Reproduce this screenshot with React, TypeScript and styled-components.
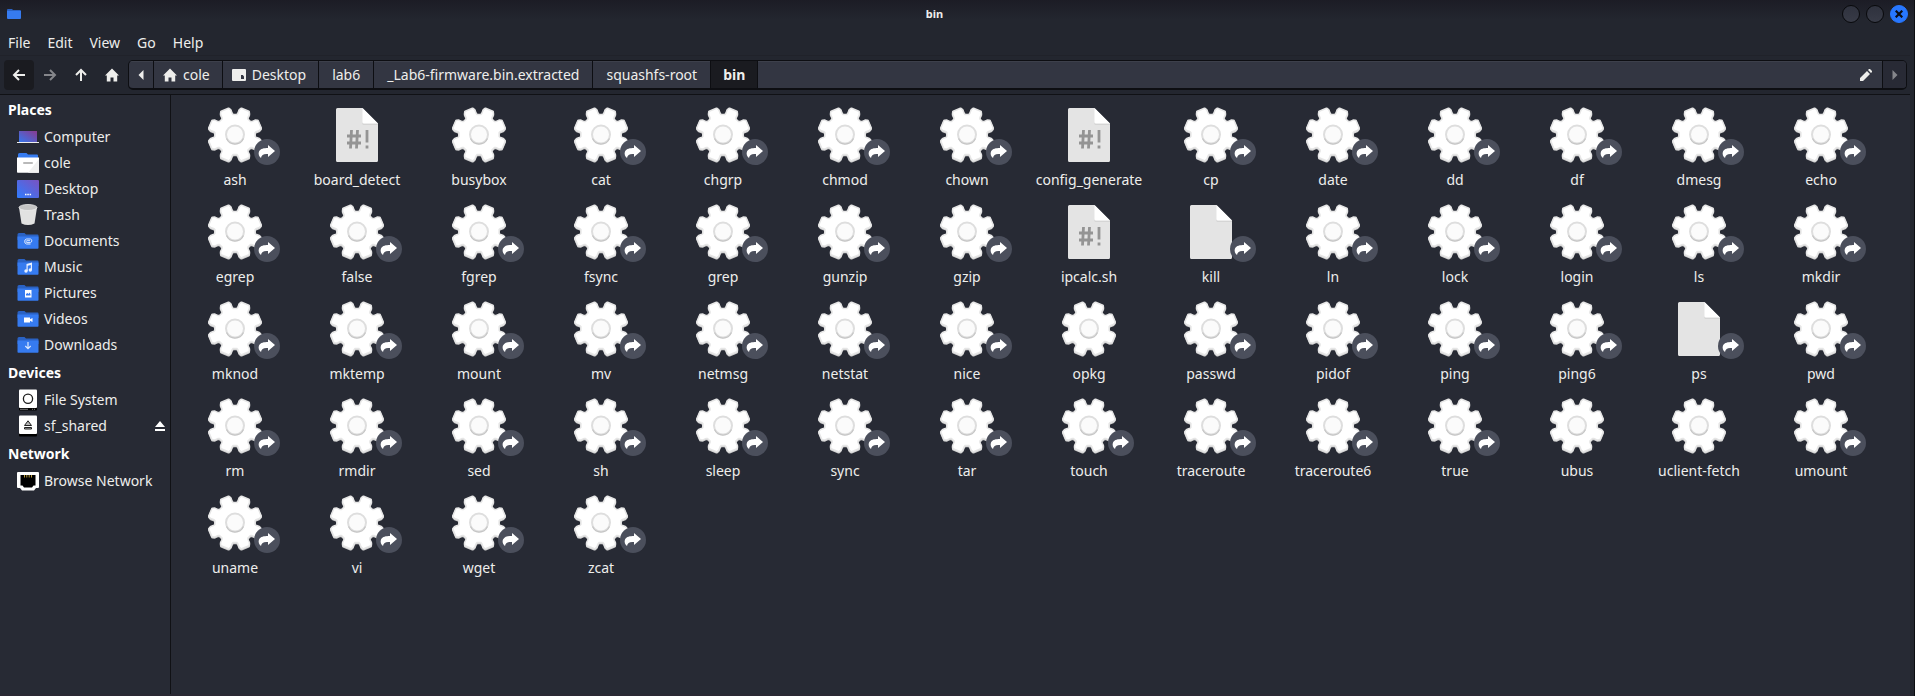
import React from "react";
import styled, { createGlobalStyle, css } from "styled-components";

const GlobalStyle = createGlobalStyle`
  *, *::before, *::after { box-sizing: border-box; }
  body {
    margin: 0;
    background: #272a34;
    color: #eeeeec;
    font-family: "Noto Sans", "Open Sans", sans-serif;
    font-size: 14px;
    line-height: 20px;
  }
  button { font: inherit; color: inherit; border: 0; padding: 0; background: none; }
  ul { list-style: none; margin: 0; padding: 0; }
  svg { display: block; flex: none; }
`;

const Window = styled.div`
  display: flex;
  flex-direction: column;
  min-height: 100vh;
  background: linear-gradient(#1c1c25, #23262f 20px);
  border-right: 1px solid #0c0d11;
`;

const TitleBar = styled.header`
  display: flex;
  align-items: center;
  height: 28px;
  padding: 0 6px 0 7px;
`;

const Title = styled.h1`
  flex: 1;
  margin: 0;
  text-align: center;
  font-size: 11px;
  font-weight: 700;
  padding-left: 6px;
`;

const WindowControls = styled.div`
  display: flex;
  gap: 6px;
`;

const ControlButton = styled.button<{ $close?: boolean }>`
  display: grid;
  place-items: center;
  width: 18px;
  height: 18px;
  border-radius: 50%;
  border: 1px solid ${(p) => (p.$close ? "#2777ff" : "#08090c")};
  background: ${(p) => (p.$close ? "#2777ff" : "linear-gradient(#2f323e, #383b47)")};
`;

const MenuBar = styled.nav`
  display: flex;
  align-items: center;
  gap: 1px;
  height: 27px;
  padding-top: 3px;
`;

const MenuItem = styled.button`
  padding: 0 8px;
`;

const Toolbar = styled.div`
  display: flex;
  align-items: center;
  gap: 1px;
  height: 40px;
  margin-right: 4px;
  padding: 0 3px 0 4px;
  border-top: 1px solid #20222a;
  border-bottom: 1px solid #101115;
`;

const ToolButton = styled.button<{ $active?: boolean }>`
  display: grid;
  place-items: center;
  width: 30px;
  height: 30px;
  border-radius: 4px;
  background: ${(p) => (p.$active ? "#1a1b20" : "transparent")};
  color: #eeeeec;
  &:disabled { color: #85868b; }
`;

const PathBar = styled.div`
  display: flex;
  flex: 1;
  height: 30px;
  border: 1px solid #0d0e12;
  border-bottom-width: 2px;
  border-radius: 5px;
  background: #333642;
  overflow: hidden;
`;

const PathButton = styled.button<{ $current?: boolean; $icon?: boolean }>`
  display: flex;
  align-items: center;
  gap: 6px;
  padding: ${(p) => (p.$icon ? "0 12px 0 9px" : "0 13px")};
  border-right: 1px solid #0d0e12;
  box-shadow: inset 0 1px #3d404b;
  ${(p) =>
    p.$current &&
    css`
      padding: 0 12px;
      background: #1a1b20;
      box-shadow: none;
      font-weight: 700;
    `}
`;

const PathArrow = styled.button<{ $end?: boolean }>`
  display: grid;
  place-items: center;
  width: 25px;
  color: #eeeeec;
  box-shadow: inset 0 1px #3d404b;
  border-right: 1px solid #0d0e12;
  ${(p) =>
    p.$end &&
    css`
      width: 24px;
      border-right: 0;
      border-left: 1px solid #0d0e12;
      background: #282a35;
      box-shadow: none;
      color: #85868b;
    `}
`;

const PathSpace = styled.div`
  display: flex;
  flex: 1;
  justify-content: flex-end;
  align-items: center;
  padding-right: 10px;
  box-shadow: inset 0 1px #3d404b;
`;

const Body = styled.div`
  display: flex;
  flex: 1;
  margin-right: 4px;
  background: #272a34;
  border-bottom: 2px solid #2a2833;
`;

const Sidebar = styled.aside`
  width: 171px;
  flex: none;
  border-right: 1px solid #101115;
`;

const GroupTitle = styled.h2`
  margin: 0;
  padding: 0 8px;
  font-size: 14px;
  line-height: 29px;
  font-weight: 700;
  color: #ffffff;
`;

const PlaceRow = styled.li`
  display: flex;
  align-items: center;
  height: 26px;
  padding: 0 5px 0 17px;
`;

const PlaceLink = styled.a`
  display: flex;
  flex: 1;
  align-items: center;
  gap: 5px;
  color: inherit;
  text-decoration: none;
  white-space: nowrap;
`;

const FileGrid = styled.ul`
  flex: 1;
  display: grid;
  grid-template-columns: repeat(auto-fill, 122px);
  grid-auto-rows: 97px;
  align-content: start;
  && { padding: 8px 3px; }
`;

const FileItem = styled.li`
  display: flex;
  flex-direction: column;
  align-items: center;
  padding-top: 1px;
`;

const FileIcon = styled.div`
  position: relative;
  width: 64px;
  height: 64px;
`;

const LinkBadge = styled.span`
  position: absolute;
  right: -13px;
  bottom: 3px;
  display: grid;
  place-items: center;
  width: 26px;
  height: 26px;
  border-radius: 50%;
  background: #4b4f5c;
`;

const FileName = styled.span`
  margin-top: 2px;
  white-space: nowrap;
`;

const polar = (radius: number, degrees: number) => {
  const a = (degrees * Math.PI) / 180;
  return `${(32 + radius * Math.sin(a)).toFixed(2)},${(30.5 - radius * Math.cos(a)).toFixed(2)}`;
};

const gearPoints = Array.from({ length: 8 }, (_, i) => {
  const a = 22.5 + i * 45;
  return [
    polar(19.5, a - 16),
    polar(21, a - 13),
    polar(24.5, a - 11.5),
    polar(26.3, a - 8.5),
    polar(26.3, a + 8.5),
    polar(24.5, a + 11.5),
    polar(21, a + 13),
    polar(19.5, a + 16),
  ].join(" ");
}).join(" ");

const Gear = () => (
  <svg width="64" height="64" viewBox="0 0 64 64" strokeLinejoin="round">
    <polygon points={gearPoints} transform="translate(0 1)" fill="#cfcfcf" stroke="#cfcfcf" strokeWidth="3" />
    <polygon points={gearPoints} fill="#e6e6e6" stroke="#e6e6e6" strokeWidth="3" />
    <polygon points={gearPoints} fill="#ffffff" />
    <circle cx="32" cy="30.500" r="9" fill="#fbfbfb" stroke="#dedede" strokeWidth="2" />
    <path d="M23.500 34.500a9.300 9.300 0 0 0 17 0" fill="none" stroke="#c6c6c6" strokeWidth="1.200" />
  </svg>
);

const Page = ({ script }: { script?: boolean }) => (
  <svg width="64" height="64" viewBox="0 0 64 64">
    <path d="M12.500 4h25L53 19.500V56.500a1.500 1.500 0 0 1-1.500 1.500H12.500a1.500 1.500 0 0 1-1.500-1.500V5.500A1.500 1.500 0 0 1 12.500 4z" fill="#e4e4e4" />
    <path d="M37 19.500h16v1.200H39a2 2 0 0 1-2-1.200z" fill="#cfcfcf" />
    <path d="M37.500 4 53 19.500H39a1.500 1.500 0 0 1-1.500-1.500z" fill="#ffffff" />
    {script && (
      <path
        d="M26.500 26 25.500 44.500M32.500 26l-1 18.500M22 32h14M22 39h14M42 26v12.500M42 41.500v3"
        fill="none"
        stroke="#949494"
        strokeWidth="2.800"
      />
    )}
  </svg>
);

const ShareArrow = () => (
  <svg width="18" height="14" viewBox="0 0 18 14">
    <path d="M10 0 17 6 10 12V9C6 8.500 3.500 9.500 3 13 1 11.500 0 9 1 6.500 2.500 3.500 6 3 10 3z" fill="#fff" />
  </svg>
);

const HomeGlyph = () => (
  <svg width="14" height="14" viewBox="0 0 14 14">
    <path d="M7 .5 14 7.500H12.200V13.500H8.500V9.500H5.500V13.500H1.800V7.500H0z" fill="currentColor" />
  </svg>
);

const Arrow = ({ turn }: { turn: number }) => (
  <svg width="14" height="14" viewBox="0 0 14 14">
    <path
      d="M2 7H13M7 2 2 7 7 12"
      transform={`rotate(${turn} 7 7)`}
      fill="none"
      stroke="currentColor"
      strokeWidth="2"
    />
  </svg>
);

const Caret = ({ right }: { right?: boolean }) => (
  <svg width="6" height="10" viewBox="0 0 6 10">
    <path d={right ? "M.5 0 5.500 5 .5 10z" : "M5.500 0 .5 5 5.500 10z"} fill="currentColor" />
  </svg>
);

const folderGlyphs: Record<string, React.ReactNode> = {
  documents: (
    <path
      d="M13.500 14H9.500a2.600 2.600 0 0 1 0-5H13.500a1.900 1.900 0 0 1 0 3.600H9.800a1 1 0 0 1 0-1.900H13"
      fill="none"
      stroke="#dbe8ff"
      strokeWidth="1"
    />
  ),
  music: (
    <g fill="#e8f0ff">
      <path d="M9.500 8 15 6.500V14H13.800V9L10.700 9.800V15H9.500z" />
      <circle cx="9" cy="15" r="1.700" />
      <circle cx="13.300" cy="14" r="1.700" />
    </g>
  ),
  pictures: (
    <g>
      <rect x="8" y="8" width="6.500" height="7.500" fill="#fff" />
      <path d="M9 13.500V12l1.500-1 1 1 1-1.500 1 1.500V13.500z" fill="#367bf0" />
    </g>
  ),
  videos: <path d="M7 9.500h6v1.700l2.500-1.200v4L13 12.800v1.700H7z" fill="#fff" />,
  downloads: <path d="M11 8v6.500M8.300 12l2.700 2.700L13.700 12" fill="none" stroke="#dbe8ff" strokeWidth="1.200" />,
};

const Folder = ({ kind }: { kind: string }) => (
  <svg width="22" height="22" viewBox="0 0 22 22">
    <path d="M.5 4.500A1.500 1.500 0 0 1 2 3H7.500L9 4.500H20.500a1 1 0 0 1 1 1V10H.5z" fill="#2a62c4" />
    <path d="M.5 6.500H21.500V18a.8.800 0 0 1-.8.800H1.300A.8.800 0 0 1 .5 18z" fill="#367bf0" />
    {folderGlyphs[kind]}
  </svg>
);

const PlaceIcon = ({ kind }: { kind: string }) => {
  if (kind in folderGlyphs) return <Folder kind={kind} />;
  return (
    <svg width="22" height="22" viewBox="0 0 22 22">
      <defs>
        <linearGradient id="screen" x1="0" y1="1" x2="1" y2="0">
          <stop offset="0" stopColor="#3577ee" />
          <stop offset="1" stopColor="#8a3a8e" />
        </linearGradient>
        <linearGradient id="desk" x1="0" y1="1" x2="1" y2="0">
          <stop offset="0" stopColor="#2f7cff" />
          <stop offset="1" stopColor="#7a52c0" />
        </linearGradient>
      </defs>
      {kind === "computer" && (
        <g>
          <rect x="2" y="5" width="18" height="11" fill="url(#screen)" />
          <rect x="0" y="16" width="22" height="1" fill="#eee" />
        </g>
      )}
      {kind === "home" && (
        <g>
          <path d="M1 6V2.500A1.500 1.500 0 0 1 2.500 1H9.500L11 2.500H20a1 1 0 0 1 1 1V6z" fill="#367bf0" />
          <path d="M0 5.500H22V20a.8.800 0 0 1-.8.800H.8A.8.800 0 0 1 0 20z" fill="#fff" />
          <path d="M22 7V20.800H11z" fill="#f0f0f0" />
          <rect x="6" y="10" width="10" height="2" rx="1" fill="#b9b9b9" />
        </g>
      )}
      {kind === "desktop" && (
        <g>
          <rect y="2" width="22" height="18" rx="1" fill="url(#desk)" />
          <path d="M8 16.500h1.500M10.300 16.500h1.500M12.600 16.500h1.500" stroke="#fff" strokeWidth="1.500" />
        </g>
      )}
      {kind === "trash" && (
        <g>
          <path d="M2 3.500 4.500 19.500Q11 22.500 17.500 19.500L20 3.500z" fill="#e2e2e2" />
          <ellipse cx="11" cy="3.500" rx="9" ry="3" fill="#c4c4c4" stroke="#ececec" strokeWidth=".8" />
        </g>
      )}
      {(kind === "disk" || kind === "share") && (
        <g>
          <rect x="2" y="3" width="18" height="18.500" rx="1" fill="#000" />
          <rect x="2" y=".5" width="18" height="18.500" rx="1" fill="#fff" />
          {kind === "disk" ? (
            <g>
              <circle cx="11" cy="9.700" r="4.600" fill="none" stroke="#1d1d1d" strokeWidth="1.300" />
              <path d="M3 20.300h8M15 20.300h1M17 20.300h1" stroke="#777" />
            </g>
          ) : (
            <g fill="#b5b5b5" stroke="#222" strokeWidth="1">
              <path d="M11 5.800 14.500 10.500h-7z" />
              <path d="M7.500 12.500h7v1.500h-7z" />
            </g>
          )}
        </g>
      )}
      {kind === "network" && (
        <g>
          <path d="M1 2H21a1 1 0 0 1 1 1V17a1 1 0 0 1-1 1H19L17 20.500H5L3 18H1a1 1 0 0 1-1-1V3A1 1 0 0 1 1 2z" fill="#fff" />
          <path d="M3.500 5h15V15.500H16.500L15 17.500H7L5.500 15.500H3.500z" fill="#000" />
          <path d="M7.500 5v2.500M9.800 5v2.500M12.200 5v2.500M14.500 5v2.500" stroke="#b99a3a" strokeWidth="1" />
        </g>
      )}
    </svg>
  );
};

const groups = [
  {
    title: "Places",
    items: [
      ["Computer", "computer"],
      ["cole", "home"],
      ["Desktop", "desktop"],
      ["Trash", "trash"],
      ["Documents", "documents"],
      ["Music", "music"],
      ["Pictures", "pictures"],
      ["Videos", "videos"],
      ["Downloads", "downloads"],
    ],
  },
  {
    title: "Devices",
    items: [
      ["File System", "disk"],
      ["sf_shared", "share"],
    ],
  },
  { title: "Network", items: [["Browse Network", "network"]] },
];

const files = `ash board_detect busybox cat chgrp chmod chown config_generate cp date dd df dmesg echo
egrep false fgrep fsync grep gunzip gzip ipcalc.sh kill ln lock login ls mkdir
mknod mktemp mount mv netmsg netstat nice opkg passwd pidof ping ping6 ps pwd
rm rmdir sed sh sleep sync tar touch traceroute traceroute6 true ubus uclient-fetch umount
uname vi wget zcat`.split(/\s+/);

const scripts = ["board_detect", "config_generate", "ipcalc.sh"];
const plain = ["kill", "ps"];
const regular = [...scripts, "busybox", "opkg", "ubus", "uclient-fetch"];

export default function App() {
  return (
    <>
      <GlobalStyle />
      <Window>
        <TitleBar>
          <svg width="14" height="10" viewBox="0 0 14 10">
            <path d="M0 1a1 1 0 0 1 1-1H5L6 1H13a1 1 0 0 1 1 1V5H0z" fill="#2a62c4" />
            <path d="M0 2H14V9a1 1 0 0 1-1 1H1A1 1 0 0 1 0 9z" fill="#367bf0" />
          </svg>
          <Title>bin</Title>
          <WindowControls>
            <ControlButton aria-label="Minimize" />
            <ControlButton aria-label="Maximize" />
            <ControlButton $close aria-label="Close">
              <svg width="8" height="8" viewBox="0 0 8 8">
                <path d="M.7.700 7.300 7.300M7.300.700.700 7.300" stroke="#0b0d14" strokeWidth="2.200" />
              </svg>
            </ControlButton>
          </WindowControls>
        </TitleBar>
        <MenuBar>
          {["File", "Edit", "View", "Go", "Help"].map((m) => (
            <MenuItem key={m}>{m}</MenuItem>
          ))}
        </MenuBar>
        <Toolbar>
          <ToolButton $active aria-label="Back"><Arrow turn={0} /></ToolButton>
          <ToolButton disabled aria-label="Forward"><Arrow turn={180} /></ToolButton>
          <ToolButton aria-label="Open parent"><Arrow turn={90} /></ToolButton>
          <ToolButton aria-label="Home"><HomeGlyph /></ToolButton>
          <PathBar>
            <PathArrow aria-label="Scroll path left"><Caret /></PathArrow>
            <PathButton $icon><HomeGlyph />cole</PathButton>
            <PathButton $icon>
              <svg width="14" height="12" viewBox="0 0 14 12">
                <path fillRule="evenodd" d="M1 0H13a1 1 0 0 1 1 1V11a1 1 0 0 1-1 1H1a1 1 0 0 1-1-1V1A1 1 0 0 1 1 0zM9 6v4h3V7.500L10.800 6z" fill="currentColor" />
              </svg>
              Desktop
            </PathButton>
            <PathButton>lab6</PathButton>
            <PathButton>_Lab6-firmware.bin.extracted</PathButton>
            <PathButton>squashfs-root</PathButton>
            <PathButton $current>bin</PathButton>
            <PathSpace>
              <button aria-label="Edit path">
                <svg width="12" height="12" viewBox="0 0 12 12">
                  <path d="M0 12V9L7 2l3 3-7 7zM8 1l1-1h1l2 2v1l-1 1z" fill="#eeeeec" />
                </svg>
              </button>
            </PathSpace>
            <PathArrow $end aria-label="Scroll path right"><Caret right /></PathArrow>
          </PathBar>
        </Toolbar>
        <Body>
          <Sidebar>
            {groups.map((g) => (
              <section key={g.title}>
                <GroupTitle>{g.title}</GroupTitle>
                <ul>
                  {g.items.map(([name, kind]) => (
                    <PlaceRow key={name}>
                      <PlaceLink href="#"><PlaceIcon kind={kind} />{name}</PlaceLink>
                      {kind === "share" && (
                        <button aria-label="Eject">
                          <svg width="10" height="10" viewBox="0 0 10 10">
                            <path d="M5 0 10 6H0zM0 8H10v2H0z" fill="#fff" />
                          </svg>
                        </button>
                      )}
                    </PlaceRow>
                  ))}
                </ul>
              </section>
            ))}
          </Sidebar>
          <FileGrid>
            {files.map((name) => (
              <FileItem key={name}>
                <FileIcon>
                  {scripts.includes(name) ? <Page script /> : plain.includes(name) ? <Page /> : <Gear />}
                  {!regular.includes(name) && <LinkBadge><ShareArrow /></LinkBadge>}
                </FileIcon>
                <FileName>{name}</FileName>
              </FileItem>
            ))}
          </FileGrid>
        </Body>
      </Window>
    </>
  );
}
